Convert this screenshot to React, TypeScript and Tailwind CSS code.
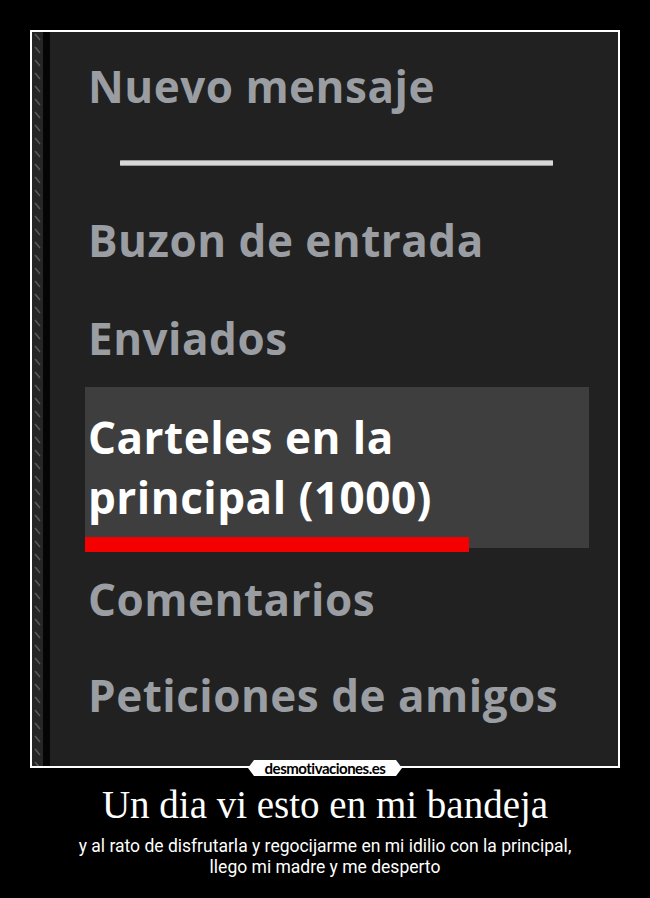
import React from 'react';

const Strip = () => (
  <svg className="block h-full w-[11px]" width="11" height="734">
    <defs>
      <pattern id="dash" width="11" height="13" patternUnits="userSpaceOnUse">
        <rect width="11" height="13" fill="#262626" />
        <path d="M3 2 L8 8" stroke="#5a5a5a" strokeWidth="1.5" />
      </pattern>
    </defs>
    <rect width="11" height="734" fill="url(#dash)" />
  </svg>
);

const item = "block h-[60px] leading-[60px] text-[44px] font-bold tracking-[0.5px] text-[#9a9da1] [font-family:'Open_Sans',sans-serif]";

export default function App() {
  return (
    <div className="w-[650px] h-[898px] bg-black pt-[30px]">
      {/* framed poster */}
      <div className="relative mx-[30px] w-[590px] h-[738px] border-2 border-white">
        <div className="flex h-full">
          <Strip />
          <div className="w-[7px] bg-[#050505]" />
          <div className="flex-1 bg-[#212121] pl-[35px] pr-[29px]">
            <div className="pl-[3px] pt-[24px]">
              <span className={item}>Nuevo mensaje</span>
            </div>
            <div className="mt-[44px] ml-[35px] mr-[36px] h-[6px] rounded-[1px] bg-[#d8d8d8] border-y border-[#9a9a9a]" />
            <div className="pl-[3px] mt-[44px]">
              <span className={item}>Buzon de entrada</span>
              <span className={`${item} mt-[38px]`}>Enviados</span>
            </div>
            <div className="relative mt-[19px] h-[161px] bg-[#3e3e3e] pl-[3px] pt-[20px]">
              <span className={`${item} text-white`}>Carteles en la</span>
              <span className={`${item} text-white`}>principal (1000)</span>
              <div className="absolute left-0 bottom-[-4px] w-[384px] h-[15px] bg-[#f50000]" />
            </div>
            <div className="pl-[3px] mt-[21px]">
              <span className={item}>Comentarios</span>
              <span className={`${item} mt-[36px]`}>Peticiones de amigos</span>
            </div>
          </div>
        </div>
        {/* watermark */}
        <div className="absolute left-1/2 -translate-x-1/2 bottom-[-10px] h-[16px] w-[154px] bg-white [clip-path:polygon(6px_0,148px_0,154px_8px,148px_16px,6px_16px,0_8px)] flex items-center justify-center">
          <span className="text-[15px] leading-[16px] font-bold tracking-[-0.5px] text-black [font-family:'Lato',sans-serif]">desmotivaciones.es</span>
        </div>
      </div>
      <div className="text-center text-white mt-[15px]">
        <div className="text-[39px] leading-[44px] [font-family:'Liberation_Serif',serif]">Un dia vi esto en mi bandeja</div>
        <div className="mt-[9px] text-[17.5px] leading-[21px] [font-family:'Roboto',sans-serif]">
          y al rato de disfrutarla y regocijarme en mi idilio con la principal,<br />llego mi madre y me desperto
        </div>
      </div>
    </div>
  );
}
